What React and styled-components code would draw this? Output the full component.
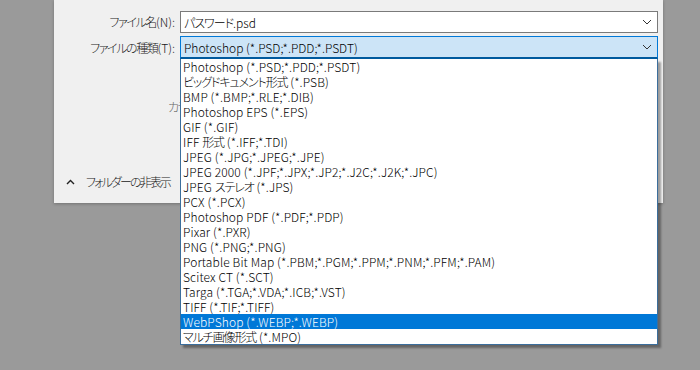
import React from 'react';
import styled, { createGlobalStyle } from 'styled-components';

const GlobalStyle = createGlobalStyle`
	html, body {
		margin: 0;
		padding: 0;
		background: #9a9a9a;
		width: 700px;
		height: 370px;
		overflow: hidden;
	}
	body {
		font-family: "Noto Sans CJK JP", "Noto Sans", sans-serif;
		font-size: 12px;
		font-weight: 300;
		font-feature-settings: "palt";
		color: #000;
	}
`

const Dialog = styled.div`
	margin-left: 54px;
	width: 609px;
	height: 203px;
	background: #f0f0f0;
	box-shadow: 0 1px 3px rgba(0, 0, 0, 0.25);
	display: flex;
	flex-direction: column;
	padding-top: 11px;
	box-sizing: border-box;
`

const Form = styled.div`
	display: grid;
	grid-template-columns: 121px 478px;
	column-gap: 5px;
	row-gap: 3px;
	align-items: center;
`

const Label = styled.label`
	text-align: right;
	white-space: nowrap;
	line-height: 16px;
	color: #1a1a1a;
`

const Field = styled.div`
	position: relative;
	height: ${p => p.$h}px;
	box-sizing: border-box;
	display: flex;
	align-items: center;
	padding-left: 3px;
	background: ${p => (p.$active ? '#cce4f7' : '#fff')};
	border: 1px solid ${p => (p.$active ? '#0078d7' : '#7a7a7a')};
	border-bottom-width: ${p => (p.$active ? 2 : 1)}px;
	border-bottom-color: ${p => (p.$active ? '#005a9e' : '#7a7a7a')};
	white-space: nowrap;
`

const Chevron = styled.svg`
	position: absolute;
	right: 5px;
	top: 50%;
	margin-top: -3px;
`

const HiddenRow = styled.div`
	margin-top: 40px;
	padding-left: 114px;
	color: #666;
	line-height: 16px;
`

const Footer = styled.div`
	margin-top: auto;
	margin-bottom: 13px;
	padding-left: 12px;
	display: flex;
	align-items: center;
	gap: 11px;
	color: #1a1a1a;
	line-height: 16px;
`

const List = styled.ul`
	position: absolute;
	top: calc(100% + 2px);
	left: -1px;
	width: 478px;
	margin: 0;
	padding: 0;
	list-style: none;
	background: #fff;
	border: 1px solid #3b6e9c;
	border-top: none;
	box-sizing: border-box;
	box-shadow: 3px 3px 2px rgba(0, 0, 0, 0.35);
	z-index: 10;
`

const Item = styled.li`
	height: 15px;
	line-height: 15px;
	padding-left: 2px;
	white-space: nowrap;
	letter-spacing: 0.12px;
	background: ${p => (p.$selected ? '#0078d7' : 'transparent')};
	color: ${p => (p.$selected ? '#fff' : '#000')};
`

// narrower kana/kanji, closer to Yu Gothic UI
const Jp = styled.span`
	letter-spacing: ${p => p.$ls || -1.4}px;
`

const jp = (text, ls) =>
	text.split(/([\u3000-\u30ff\u4e00-\u9fff]+)/).map((part, i) =>
		i % 2 ? <Jp key={i} $ls={ls}>{part}</Jp> : part
	)

const types = [
	'Photoshop (*.PSD;*.PDD;*.PSDT)',
	'ビッグドキュメント形式 (*.PSB)',
	'BMP (*.BMP;*.RLE;*.DIB)',
	'Photoshop EPS (*.EPS)',
	'GIF (*.GIF)',
	'IFF 形式 (*.IFF;*.TDI)',
	'JPEG (*.JPG;*.JPEG;*.JPE)',
	'JPEG 2000 (*.JPF;*.JPX;*.JP2;*.J2C;*.J2K;*.JPC)',
	'JPEG ステレオ (*.JPS)',
	'PCX (*.PCX)',
	'Photoshop PDF (*.PDF;*.PDP)',
	'Pixar (*.PXR)',
	'PNG (*.PNG;*.PNG)',
	'Portable Bit Map (*.PBM;*.PGM;*.PPM;*.PNM;*.PFM;*.PAM)',
	'Scitex CT (*.SCT)',
	'Targa (*.TGA;*.VDA;*.ICB;*.VST)',
	'TIFF (*.TIF;*.TIFF)',
	'WebPShop (*.WEBP;*.WEBP)',
	'マルチ画像形式 (*.MPO)'
]

const Down = () => (
	<Chevron width="10" height="6" viewBox="0 0 10 6">
		<path d="M1 1 L5 5 L9 1" fill="none" stroke="#333" strokeWidth="1" />
	</Chevron>
)

export default function App() {
	return (
		<>
			<GlobalStyle />
			<Dialog>
				<Form>
					<Label>{jp('ファイル名(N):')}</Label>
					<Field $h={22}>
						{jp('パスワード.psd', -1)}
						<Down />
					</Field>
					<Label>{jp('ファイルの種類(T):')}</Label>
					<Field $h={23} $active>
						Photoshop (*.PSD;*.PDD;*.PSDT)
						<Down />
						<List>
							{types.map((t, i) => (
								<Item key={t} $selected={i === 17}>{jp(t, -1.1)}</Item>
							))}
						</List>
					</Field>
				</Form>
				<HiddenRow>{jp('カラー:')}</HiddenRow>
				<Footer>
					<svg width="9" height="6" viewBox="0 0 9 6">
						<path d="M1 5 L4.5 1.5 L8 5" fill="none" stroke="#222" strokeWidth="1.4" />
					</svg>
					{jp('フォルダーの非表示', -1.9)}
				</Footer>
			</Dialog>
		</>
	);
}
